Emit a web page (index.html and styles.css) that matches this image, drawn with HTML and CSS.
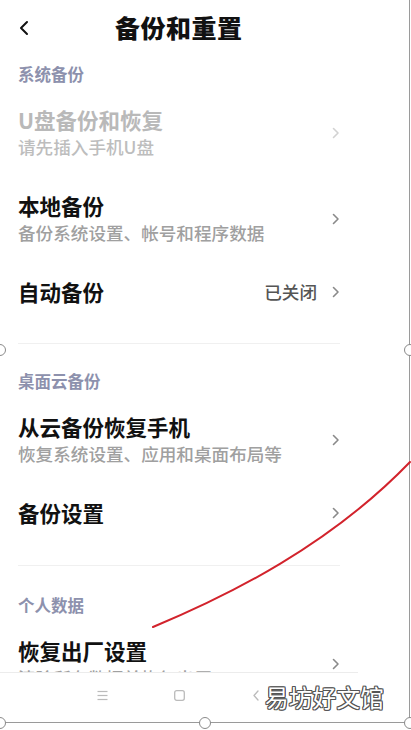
FILE: index.html
```html
<!DOCTYPE html>
<html lang="zh-CN">
<head>
<meta charset="utf-8">
<title>备份和重置</title>
<link rel="stylesheet" href="styles.css">
</head>
<body>
<div class="frame">
  <div class="screen">
    <header class="topbar">
      <svg class="back" width="12" height="16" viewBox="0 0 12 16"><polyline points="9,2 3,8 9,14" fill="none" stroke="#111" stroke-width="2" stroke-linecap="round" stroke-linejoin="round"/></svg>
      <h1 class="title">备份和重置</h1>
    </header>
    <main class="content">
      <section class="group">
        <div class="group-title">系统备份</div>
        <div class="row disabled">
          <div class="text"><div class="t">U盘备份和恢复</div><div class="s">请先插入手机U盘</div></div>
          <svg class="chev" width="8" height="12" viewBox="0 0 8 12"><polyline points="1.5,1.5 6,6 1.5,10.5" fill="none" stroke-width="1.6" stroke-linecap="round" stroke-linejoin="round"/></svg>
        </div>
        <div class="row">
          <div class="text"><div class="t">本地备份</div><div class="s">备份系统设置、帐号和程序数据</div></div>
          <svg class="chev" width="8" height="12" viewBox="0 0 8 12"><polyline points="1.5,1.5 6,6 1.5,10.5" fill="none" stroke-width="1.6" stroke-linecap="round" stroke-linejoin="round"/></svg>
        </div>
        <div class="row">
          <div class="text"><div class="t">自动备份</div></div>
          <div class="right"><span class="value">已关闭</span><svg class="chev" width="8" height="12" viewBox="0 0 8 12"><polyline points="1.5,1.5 6,6 1.5,10.5" fill="none" stroke-width="1.6" stroke-linecap="round" stroke-linejoin="round"/></svg></div>
        </div>
      </section>
      <section class="group">
        <div class="group-title">桌面云备份</div>
        <div class="row">
          <div class="text"><div class="t">从云备份恢复手机</div><div class="s">恢复系统设置、应用和桌面布局等</div></div>
          <svg class="chev" width="8" height="12" viewBox="0 0 8 12"><polyline points="1.5,1.5 6,6 1.5,10.5" fill="none" stroke-width="1.6" stroke-linecap="round" stroke-linejoin="round"/></svg>
        </div>
        <div class="row">
          <div class="text"><div class="t">备份设置</div></div>
          <svg class="chev" width="8" height="12" viewBox="0 0 8 12"><polyline points="1.5,1.5 6,6 1.5,10.5" fill="none" stroke-width="1.6" stroke-linecap="round" stroke-linejoin="round"/></svg>
        </div>
      </section>
      <section class="group last">
        <div class="group-title">个人数据</div>
        <div class="row">
          <div class="text"><div class="t">恢复出厂设置</div><div class="s">清除所有数据并恢复出厂</div></div>
          <svg class="chev" width="8" height="12" viewBox="0 0 8 12"><polyline points="1.5,1.5 6,6 1.5,10.5" fill="none" stroke-width="1.6" stroke-linecap="round" stroke-linejoin="round"/></svg>
        </div>
      </section>
    </main>
    <nav class="navbar">
      <svg width="11" height="11" viewBox="0 0 11 11"><g stroke="#bbb" stroke-width="1.2"><line x1="0.5" y1="1.5" x2="10.5" y2="1.5"/><line x1="0.5" y1="5.5" x2="10.5" y2="5.5"/><line x1="0.5" y1="9.5" x2="10.5" y2="9.5"/></g></svg>
      <svg width="11" height="11" viewBox="0 0 11 11"><rect x="0.7" y="0.7" width="9.6" height="9.6" rx="2" fill="none" stroke="#bbb" stroke-width="1.3"/></svg>
      <svg width="11" height="11" viewBox="0 0 11 11"><polyline points="7,1 3,5.5 7,10" fill="none" stroke="#bbb" stroke-width="1.3" stroke-linecap="round" stroke-linejoin="round"/></svg>
    </nav>
  </div>

  <svg class="scribble" width="411" height="730" viewBox="0 0 411 730"><path d="M153 627 C 230 595, 330 545, 410 462" fill="none" stroke="#d2232c" stroke-width="2" stroke-linecap="round"/></svg>
  <div class="watermark">易坊好文馆</div>
  <span class="handle h-ml"></span>
  <span class="handle h-mr"></span>
  <span class="handle h-bl"></span>
  <span class="handle h-bm"></span>
  <span class="handle h-br"></span>
</div>
</body>
</html>
```

FILE: styles.css
```css
html, body {
  margin: 0;
  padding: 0;
  background: #fff;
}
body {
  font-family: "Noto Sans CJK SC", "Noto Sans", sans-serif;
  width: 411px;
  height: 730px;
  overflow: hidden;
}
.frame {
  position: relative;
  width: 409px;
  height: 722px;
  border-right: 1px solid #9a9a9a;
  border-bottom: 1px solid #9a9a9a;
}
.screen {
  display: flex;
  flex-direction: column;
  height: 722px;
}
.topbar {
  height: 58px;
  box-sizing: border-box;
  padding-bottom: 4px;
  flex: none;
  display: flex;
  align-items: center;
  padding-left: 18px;
}
.back {
  display: block;
  margin-top: 1px;
}
.title {
  margin: 0 0 0 85px;
  font-size: 25px;
  line-height: 32px;
  font-weight: 900;
  color: #111;
  letter-spacing: 0.5px;
}
.content {
  flex: 1;
  overflow: hidden;
  padding: 0 69px 0 18px;
}
.group + .group {
  border-top: 1px solid #f0f0f0;
  margin-top: 18px;
}
.group.last {
  margin-top: 19px;
}
.group-title {
  font-size: 16.5px;
  line-height: 20px;
  font-weight: 700;
  color: #8d91ad;
  padding: 6px 0 9px;
}
.group + .group .group-title {
  padding-top: 27px;
}
.group.last .group-title {
  padding-top: 29px;
}
.row {
  display: flex;
  align-items: center;
  justify-content: space-between;
  padding: 13px 0 19px;
}
.t {
  font-size: 21.5px;
  line-height: 28px;
  font-weight: 700;
  color: #111;
}
.s {
  font-size: 17.6px;
  line-height: 26px;
  font-weight: 500;
  color: #a0a0a0;
}
.chev {
  display: block;
  stroke: #8a8a8a;
}
.right {
  display: flex;
  align-items: center;
  gap: 15px;
}
.value {
  font-size: 17.6px;
  line-height: 28px;
  font-weight: 500;
  color: #555;
}
.disabled .t { color: #b9b9b9; }
.disabled .s { color: #bdbdbd; }
.disabled .chev { stroke: #d2d2d2; }

.navbar {
  height: 50px;
  width: 358px;
  flex: none;
  border-top: 1px solid #ececec;
  display: flex;
  align-items: center;
  justify-content: center;
  gap: 66px;
  padding-bottom: 4px;
  box-sizing: border-box;
  background: #fff;
}
.navbar svg { display: block; }

.scribble {
  position: absolute;
  left: 0;
  top: 0;
  pointer-events: none;
}
.watermark {
  position: absolute;
  left: 265px;
  top: 681px;
  font-size: 23.5px;
  line-height: 32px;
  color: #fff;
  letter-spacing: 0.3px;
  text-shadow: 1px 0 0 #555, -1px 0 0 #555, 0 1px 0 #555, 0 -1px 0 #555,
    1px 1px 0 #555, -1px -1px 0 #555, 1px -1px 0 #555, -1px 1px 0 #555;
}
.handle {
  position: absolute;
  width: 10px;
  height: 10px;
  border: 1.5px solid #8a8a8a;
  border-radius: 50%;
  background: #fff;
  transform: translate(-50%, -50%);
}
.h-ml { left: 0; top: 350px; }
.h-mr { left: 410px; top: 350px; }
.h-bl { left: 0; top: 723px; }
.h-bm { left: 205px; top: 723px; }
.h-br { left: 410px; top: 723px; }
```
